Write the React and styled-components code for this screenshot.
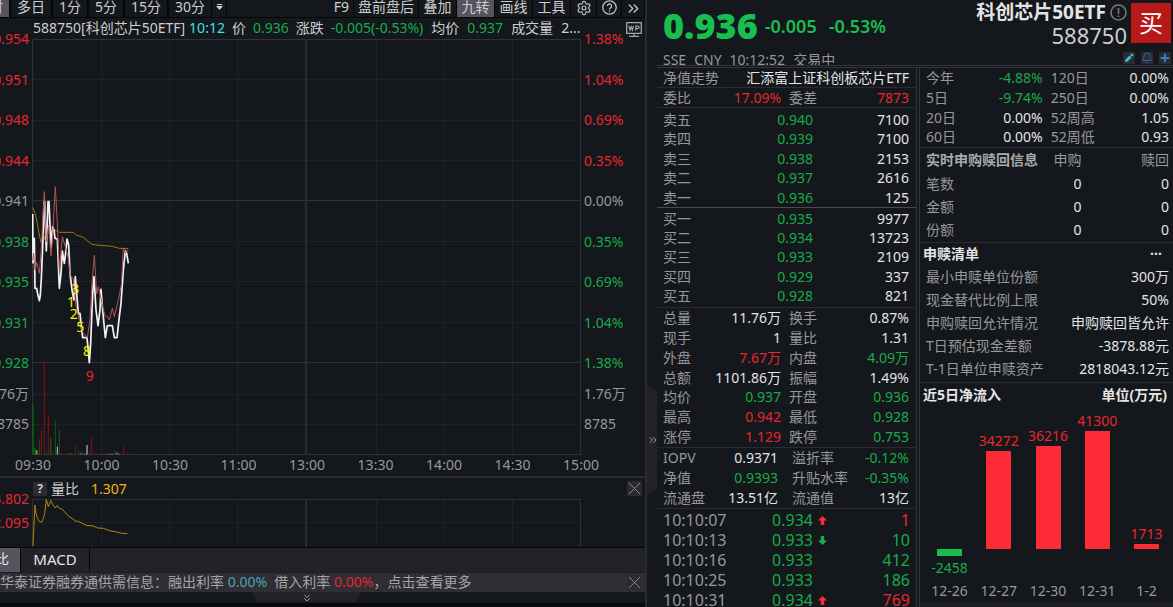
import React from "react";
import styled, { createGlobalStyle } from "styled-components";
import { Settings, ChevronsRight, ChevronsDown, Bell, Plus } from "lucide-react";

const c = {
  bg: "#14171c",
  panel: "#232228",
  raised: "#56555f",
  line: "#2a2b30",
  text: "#e4e4e4",
  soft: "#cecece",
  muted: "#989898",
  red: "#e8262f",
  green: "#18ab48",
  cyan: "#3fe0e6",
  teal: "#4aa5b8",
  gold: "#f5b40c",
};

const Global = createGlobalStyle`
  *, *::before, *::after { box-sizing: border-box; }
  html, body { margin: 0; background: ${c.bg}; }
  body {
    overflow: hidden;
    color: ${c.text};
    font: 14px/20px "Noto Sans", "Noto Sans CJK SC", sans-serif;
    white-space: nowrap;
  }
  button { font: inherit; color: inherit; background: none; border: 0; padding: 0; }
  ul, ol, dl, h1, h2, p { margin: 0; padding: 0; list-style: none; font: inherit; }
  a { color: inherit; text-decoration: none; }
  svg { display: block; }
`;

const Page = styled.main`
  display: grid;
  grid-template-columns: minmax(0, 1fr) 528px;
  height: 100vh;
  overflow: hidden;
`;

/* ---------- left: chart side ---------- */
const ChartSide = styled.section`
  display: flex;
  flex-direction: column;
  min-width: 0;
  min-height: 0;
`;

const Toolbar = styled.nav`
  display: flex;
  justify-content: space-between;
  flex: none;
  height: 18px;
  border-bottom: 1px solid #050608;
`;

const ToolGroup = styled.div`
  display: flex;
`;

const ToolButton = styled.button`
  display: flex;
  justify-content: ${(p) => (p.$clipped ? "flex-end" : "center")};
  align-items: flex-start;
  width: ${(p) => (p.$width ? `${p.$width}px` : "auto")};
  padding: 0 ${(p) => (p.$width ? 0 : p.$wide ? 6 : 4)}px;
  padding-right: ${(p) => (p.$clipped ? "6px" : "")};
  line-height: 14px;
  color: ${c.soft};
  background: ${(p) => (p.$active ? c.raised : "transparent")};
  border-left: ${(p) => (p.$wide ? 1 : 0)}px solid #050608;
  border-right: 1px solid #050608;
`;

const InfoLine = styled.div`
  display: flex;
  flex: none;
  height: 21px;
  padding: 0 3px 0 33px;
`;

const InfoText = styled.span`
  margin-right: ${(p) => p.$gap || 7}px;
  color: ${(p) => p.$color || c.soft};
`;

const InfoIcon = styled.button`
  margin-left: auto;
  padding-top: 3px;
`;

const PlotRow = styled.div`
  display: grid;
  grid-template-columns: 32px minmax(0, 1fr) 64px;
  flex: ${(p) => (p.$fill ? "1 1 0" : "none")};
  height: ${(p) => (p.$fill ? "auto" : "48px")};
  min-height: 0;
`;

const PlotArea = styled.div`
  position: relative;
  min-width: 0;
  min-height: 0;
  svg { position: absolute; width: 100%; height: 100%; }
`;

const AxisColumn = styled.div`
  display: flex;
  flex-direction: column;
  padding: ${(p) => (p.$right ? "0 0 0 3px" : "0 3px 0 0")};
`;

const AxisList = styled.ol`
  display: flex;
  flex-direction: column;
  flex: ${(p) => p.$grow} 1 0;
  justify-content: ${(p) => (p.$inner ? "space-evenly" : "space-between")};
`;

const AxisLabel = styled.li`
  display: flex;
  align-items: center;
  justify-content: ${(p) => (p.$right ? "flex-start" : "flex-end")};
  height: 0;
  color: ${(p) => p.$color || c.muted};
`;

const TurnMark = styled.span`
  position: absolute;
  left: ${(p) => p.$x}%;
  top: ${(p) => p.$y}%;
  transform: translate(-50%, -50%);
  line-height: 12px;
  color: ${(p) => p.$color || "#f2f20c"};
`;

const TimeAxis = styled.ol`
  display: flex;
  justify-content: space-between;
  flex: none;
  height: 23px;
  padding: 0 64px 0 33px;
  border-bottom: 2px solid ${c.line};
`;

const TimeLabel = styled.li`
  display: flex;
  justify-content: center;
  width: 0;
  color: ${c.muted};
`;

const IndicatorHead = styled.div`
  display: flex;
  align-items: center;
  flex: none;
  height: 21px;
  padding: 0 3px 0 33px;
`;

const HelpChip = styled.button`
  width: 14px;
  height: 14px;
  margin-right: 4px;
  line-height: 14px;
  font-weight: 700;
  font-size: 12px;
  color: ${c.soft};
  background: #2c2b31;
`;

const CloseButton = styled.button`
  width: 15px;
  height: 15px;
  margin-left: auto;
  color: #87878c;
  background: #2c2b31;
`;

const Tabs = styled.div`
  display: flex;
  flex: none;
  height: 26px;
  border-top: 1px solid #050608;
  border-bottom: 1px solid #1b1b20;
  background: ${c.panel};
`;

const Tab = styled.button`
  display: flex;
  justify-content: ${(p) => (p.$active ? "flex-end" : "center")};
  width: ${(p) => p.$width}px;
  padding-right: ${(p) => (p.$active ? 11 : 0)}px;
  font-size: ${(p) => (p.$active ? 14 : 15)}px;
  line-height: 22px;
  border-right: 1px solid #050608;
  background: ${(p) => (p.$active ? c.raised : "transparent")};
`;

const Notice = styled.div`
  display: flex;
  align-items: center;
  flex: none;
  height: 19px;
  padding-right: 3px;
  line-height: 18px;
  color: #a5a5a7;
  background: #2f2e34;
`;

const NoticeLink = styled.a`
  height: 19px;
`;

const Tone = styled.span`
  color: ${(p) => p.$color};
`;

const Drawer = styled.div`
  display: flex;
  justify-content: center;
  flex: none;
  height: 15px;
  padding-right: 32px;
  border-bottom: 4px solid #08090c;
`;

const DrawerHandle = styled.button`
  display: grid;
  place-items: center;
  width: 109px;
  height: 10px;
  color: #a2a2a5;
  background: ${c.panel};
  clip-path: polygon(0 0, 100% 0, 96% 100%, 4% 100%);
`;

/* ---------- right: quote side ---------- */
const QuoteSide = styled.section`
  display: grid;
  grid-template-columns: 10px minmax(0, 1fr);
  min-height: 0;
  border-left: 2px solid ${c.line};
`;

const Gutter = styled.div`
  display: flex;
  align-items: center;
  padding-top: 273px;
`;

const SideHandle = styled.button`
  display: grid;
  place-items: center;
  width: 10px;
  height: 108px;
  color: #a2a2a5;
  background: ${c.panel};
  clip-path: polygon(0 0, 100% 5%, 100% 95%, 0 100%);
`;

const QuoteBody = styled.div`
  display: flex;
  flex-direction: column;
  min-width: 0;
  min-height: 0;
`;

const Header = styled.header`
  display: flex;
  justify-content: space-between;
  flex: none;
  height: 68px;
  padding: 2px 2px 0 6px;
  overflow: hidden;
  border-bottom: 3px double #33333a;
`;

const PriceLine = styled.div`
  display: flex;
  align-items: center;
  gap: ${(p) => p.$gap}px;
  height: 48px;
  color: #18be50;
  font-weight: 700;
`;

const BigPrice = styled.strong`
  font-size: 36px;
  line-height: 48px;
`;

const Change = styled.span`
  font-size: 18px;
  font-weight: 600;
`;

const Status = styled.p`
  display: flex;
  gap: 8px;
  color: ${c.muted};
`;

const Identity = styled.div`
  display: grid;
  grid-template-columns: auto 40px;
  grid-template-rows: 20px 26px 16px;
  column-gap: 4px;
`;

const FundName = styled.h1`
  display: flex;
  align-items: center;
  justify-content: flex-end;
  gap: 4px;
  font-size: 19px;
  font-weight: 700;
  line-height: 20px;
`;

const FundCode = styled.p`
  grid-row: 2;
  text-align: right;
  font-size: 22px;
  line-height: 26px;
  color: ${c.soft};
`;

const BuyButton = styled.button`
  grid-column: 2;
  grid-row: 1 / 3;
  height: 40px;
  margin-top: 1px;
  font-size: 24px;
  line-height: 38px;
  color: #fff;
  background: #b91818;
`;

const IconRow = styled.div`
  grid-column: 1 / 3;
  grid-row: 3;
  display: flex;
  justify-content: flex-end;
  align-items: flex-end;
  gap: 6px;
`;

const MiniButton = styled.button`
  display: grid;
  place-items: center;
  width: 12px;
  height: 12px;
  color: ${(p) => p.$color};
  background: #2b2c32;
`;

const Panels = styled.div`
  display: grid;
  grid-template-columns: 259px minmax(0, 1fr);
  flex: 1;
  min-height: 0;
`;

const BookPanel = styled.div`
  min-height: 0;
  overflow: hidden;
`;

const FactPanel = styled.div`
  display: flex;
  flex-direction: column;
  min-height: 0;
  border-left: 4px double #33333a;
`;

const LineRow = styled.div`
  display: flex;
  justify-content: space-between;
  height: 20px;
  padding: 0 7px 0 6px;
  border-bottom: 1px solid ${c.line};
`;

const Block = styled.div`
  padding: ${(p) => p.$pad || "0 7px 0 6px"};
  border-bottom: ${(p) => (p.$plain ? 0 : 1)}px solid ${(p) => (p.$strong ? "#4a4a50" : c.line)};
`;

const DataTable = styled.table`
  width: 100%;
  height: ${(p) => (p.$height ? `${p.$height}px` : "auto")};
  table-layout: fixed;
  border-collapse: collapse;
  font-size: ${(p) => p.$size || 14}px;
  th, td { vertical-align: ${(p) => (p.$top ? "top" : "middle")}; }
`;

const Label = styled.th`
  width: ${(p) => p.$width || "auto"};
  padding: 0 0 0 ${(p) => p.$indent || 0}px;
  text-align: left;
  font-weight: 400;
  line-height: ${(p) => p.$line || 19}px;
  color: ${c.muted};
`;

const Value = styled.td`
  width: ${(p) => p.$width || "auto"};
  padding: 0 ${(p) => p.$inset || 0}px 0 0;
  text-align: right;
  line-height: ${(p) => p.$line || 19}px;
  color: ${(p) => p.$color || c.text};
`;

const ArrowCell = styled.td`
  width: 20px;
  padding: 0 0 0 5px;
`;

const SectionTitle = styled.h2`
  display: flex;
  justify-content: space-between;
  align-items: center;
  flex: none;
  height: ${(p) => p.$height}px;
  padding: 0 6px 0 3px;
  font-weight: 700;
`;

const Dots = styled.button`
  width: 22px;
  line-height: 12px;
  font-weight: 700;
`;

const FlowHead = styled.th`
  height: 24px;
  padding: 0;
  width: ${(p) => p.$width || "auto"};
  text-align: ${(p) => (p.$left ? "left" : "right")};
  font-weight: ${(p) => (p.$left ? 700 : 400)};
  color: ${(p) => (p.$left ? "#a9a9a9" : c.muted)};
`;

const Bars = styled.div`
  display: flex;
  flex: 1;
  min-height: 0;
  padding: 0 2px 0 5px;
  border-bottom: 5px solid #1c1d22;
`;

const BarColumn = styled.div`
  display: flex;
  flex-direction: column;
  flex: 1;
  align-items: center;
  color: ${(p) => (p.$down ? c.green : c.red)};
`;

const AboveZero = styled.div`
  display: flex;
  flex-direction: column;
  flex: 1;
  justify-content: flex-end;
  align-items: center;
`;

const BelowZero = styled.div`
  display: flex;
  flex-direction: column;
  align-items: center;
  gap: 2px;
  height: 30px;
`;

const Bar = styled.div`
  width: 25px;
  background: ${(p) => (p.$down ? "#18bd50" : "#fc2b35")};
`;

const BarDate = styled.span`
  height: 23px;
  line-height: 23px;
  color: ${c.muted};
`;

/* ---------- data ---------- */
const priceAxis = ["0.954", "0.951", "0.948", "0.944", "0.941", "0.938", "0.935", "0.931", "0.928"];
const pctAxis = ["1.38%", "1.04%", "0.69%", "0.35%", "0.00%", "0.35%", "0.69%", "1.04%", "1.38%"];
const axisTone = (i) => (i < 4 ? c.red : i > 4 ? c.green : c.muted);
const times = ["09:30", "10:00", "10:30", "11:00", "13:00", "13:30", "14:00", "14:30", "15:00"];

const priceLine =
  "98,132 99,278 103,205 105,355 110,355 113,372 118,392 121,375 124,325 128,230 132,95 134,95 139,243 144,95 147,95 153,235 158,170 162,180 165,205 172,207 178,355 183,310 187,243 190,262 193,280 198,240 201,207 206,225 210,310 216,360 222,390 226,320 230,370 235,430 240,430 243,460 248,503 261,503 268,578 272,520 278,370 282,320 288,420 294,467 300,420 303,358 308,420 316,503 322,467 337,467 343,503 351,503 358,440 363,400 370,300 376,243 380,250 385,280";
const leadLine =
  "98,270 101,250 105,300 110,278 118,310 123,250 133,65 139,215 146,165 153,258 158,195 166,50 172,160 178,300 187,200 196,230 205,265 211,318 220,325 228,410 243,470 250,490 262,503 270,450 276,340 283,255 290,372 295,350 303,385 308,410 315,438 322,440 328,450 337,415 343,440 350,410 356,385 364,345 370,233 376,250 380,243 385,243";
const averageLine =
  "98,112 105,130 112,160 118,195 123,218 128,218 135,200 145,188 155,182 172,182 178,187 220,187 228,195 250,202 262,212 275,223 300,226 337,229 358,235 385,236";
const ratioLine =
  "99,588 105,465 108,490 112,503 118,514 125,517 130,505 134,490 139,449 145,470 152,452 158,463 166,474 172,466 178,475 187,478 205,498 228,514 235,514 258,526 280,528 293,534 310,535 328,542 350,546 360,549 382,551";

const R = "#8e0d12";
const G = "#0d5c14";
const W = "#77777b";
const volumes = [
  [99, 165, G, 5], [104, 293, G, 6], [110, 300, W, 6], [118, 267, G], [124, 241, R], [133, 39, R],
  [139, 306, G], [145, 195, R], [152, 265, G, 4], [159, 311, R, 5], [166, 210, G], [172, 290, "#c8c8c8"],
  [178, 240, G], [187, 310, R, 5], [196, 311, R, 5], [204, 311, G, 6], [213, 309, G, 6], [220, 310, G],
  [227, 285, R], [236, 302, G], [242, 309, W], [248, 307, G, 5], [254, 311, W, 5], [261, 285, W, 6],
  [268, 310, G], [274, 262, R], [283, 311, R, 6], [292, 311, R, 6], [301, 311, G, 6], [310, 311, R, 5],
  [317, 309, G], [327, 311, W, 5], [336, 311, W, 5], [343, 300, G], [350, 307, W, 5], [358, 311, W, 5],
  [370, 289, R], [378, 311, R, 5], [385, 309, G],
];

const marks = [
  ["3", 7.9, 60.1], ["1", 7.1, 63.2], ["2", 7.6, 66.2], ["5", 8.8, 69.2], ["8", 10, 75.1], ["9", 10.5, 81, c.red],
];

const sells = [["卖五", "0.940", "7100"], ["卖四", "0.939", "7100"], ["卖三", "0.938", "2153"], ["卖二", "0.937", "2616"], ["卖一", "0.936", "125"]];
const buys = [["买一", "0.935", "9977"], ["买二", "0.934", "13723"], ["买三", "0.933", "2109"], ["买四", "0.929", "337"], ["买五", "0.928", "821"]];

const metrics = [
  ["总量", "11.76万", , "换手", "0.87%"],
  ["现手", "1", , "量比", "1.31"],
  ["外盘", "7.67万", c.red, "内盘", "4.09万", c.green],
  ["总额", "1101.86万", , "振幅", "1.49%"],
  ["均价", "0.937", c.green, "开盘", "0.936", c.green],
  ["最高", "0.942", c.red, "最低", "0.928", c.green],
  ["涨停", "1.129", c.red, "跌停", "0.753", c.green],
];
const fundMetrics = [
  ["IOPV", "0.9371", , "溢折率", "-0.12%", c.green],
  ["净值", "0.9393", c.green, "升贴水率", "-0.35%", c.green],
  ["流通盘", "13.51亿", , "流通值", "13亿"],
];
const returns = [
  ["今年", "-4.88%", c.green, "120日", "0.00%"],
  ["5日", "-9.74%", c.green, "250日", "0.00%"],
  ["20日", "0.00%", , "52周高", "1.05"],
  ["60日", "0.00%", , "52周低", "0.93"],
];
const ticks = [
  ["10:10:07", "0.934", "up", "1", c.red],
  ["10:10:13", "0.933", "down", "10", c.green],
  ["10:10:16", "0.933", "", "412", c.green],
  ["10:10:25", "0.933", "", "186", c.green],
  ["10:10:31", "0.934", "up", "769", c.red],
];
const creation = [
  ["最小申赎单位份额", "300万"],
  ["现金替代比例上限", "50%"],
  ["申购赎回允许情况", "申购赎回皆允许"],
  ["T日预估现金差额", "-3878.88元"],
  ["T-1日单位申赎资产", "2818043.12元"],
];
const flows = [["12-26", -2458], ["12-27", 34272], ["12-30", 36216], ["12-31", 41300], ["1-2", 1713]];

/* ---------- drawings ---------- */
const verticals = [101, 169, 237, 376, 444, 512];

function Grid({ top, bottom, solid, dotted }) {
  return (
    <g fill="none" stroke="#2b2c31" shapeRendering="crispEdges">
      {verticals.map((x) => (
        <path key={x} d={`M${x}.5 ${top}V${bottom}`} strokeDasharray="1 1" />
      ))}
      {dotted.map((y) => (
        <path key={y} d={`M33 ${y}.5H581`} strokeDasharray="1 1" />
      ))}
      {solid.map((y) => (
        <path key={y} d={`M32 ${y}.5H581`} stroke="#313237" />
      ))}
      <path d={`M32.5 ${top}V${bottom}M580.5 ${top}V${bottom}`} stroke="#303136" />
      <path d={`M306 ${top}V${bottom}`} stroke="#2a2b30" strokeWidth="2" />
    </g>
  );
}

function Trace({ points, color, width = 1, y }) {
  return (
    <g transform={`translate(0 ${y}) scale(0.33333)`}>
      <polyline points={points} fill="none" stroke={color} strokeWidth={width * 3} strokeLinejoin="round" />
    </g>
  );
}

const CrossIcon = () => (
  <svg width="15" height="15" viewBox="0 0 15 15" fill="none" stroke="currentColor">
    <path d="M2 2l11 11M13 2L2 13" />
  </svg>
);

const HelpIcon = () => (
  <svg width="15" height="15" viewBox="0 0 15 15" fill="none" stroke="#c0c0c0" strokeWidth="1.3">
    <circle cx="7.5" cy="7.5" r="6.7" />
    <path d="M5.4 6.1a2.1 2.1 0 1 1 3.1 1.8c-.7.4-1 .8-1 1.5M7.5 10.4v1.3" />
  </svg>
);

const MonitorIcon = () => (
  <svg width="16" height="16" viewBox="0 0 16 16" fill="none" stroke="#a5a5a5" strokeWidth="1.3">
    <path d="M.7.7h14.6v10.6H.7zM8 11.5V14M3 14.3h10" />
    <path d="M3 3.8l1 4.4 1.2-3.4 1.2 3.4 1-4.4M9.8 8.7V4.2h2q1.3 0 1.3 1.2t-1.3 1.2h-2" strokeWidth="1.2" />
  </svg>
);

const AlertIcon = () => (
  <svg width="17" height="17" viewBox="0 0 17 17" fill="none" stroke="#77777a" strokeWidth="1.6">
    <circle cx="8.5" cy="8.5" r="7.5" />
    <path d="M8.5 4v6M8.5 11.4v1.7" />
  </svg>
);

const PencilIcon = () => (
  <svg width="12" height="12" viewBox="0 0 12 12" fill="#36c3d6">
    <path d="M2 10l.5-2.6 4-4 2.1 2.1-4 4zM7.2 2.7l1-1q.6-.4 1.1 0l1 1q.4.6 0 1.1l-1 1z" />
  </svg>
);

const TickArrow = ({ dir }) => (
  <svg width="9" height="20" viewBox="0 -6 9 20" fill={dir === "up" ? "#fc2b35" : c.green}>
    {dir === "up" ? <path d="M4.5 0L9 4.6H6.2V9H2.8V4.6H0z" /> : <path d="M4.5 9L0 4.4h2.8V0h3.4v4.4H9z" />}
  </svg>
);

/* ---------- parts ---------- */
function Axis({ right, groups }) {
  return (
    <AxisColumn $right={right}>
      {groups.map((g, n) => (
        <AxisList key={n} $grow={g.grow} $inner={g.inner}>
          {g.items.map((t, i) => (
            <AxisLabel key={i} $right={right} $color={g.tone && g.tone(i)}>{t}</AxisLabel>
          ))}
        </AxisList>
      ))}
    </AxisColumn>
  );
}

function Book({ rows, height }) {
  return (
    <DataTable $height={height} $top>
      <tbody>
        {rows.map(([name, price, size]) => (
          <tr key={name}>
            <Label scope="row" $width="20%">{name}</Label>
            <Value $color={c.green} $width="41%">{price}</Value>
            <Value>{size}</Value>
          </tr>
        ))}
      </tbody>
    </DataTable>
  );
}

function Pairs({ rows, inset = 0, indent = 8, height }) {
  return (
    <DataTable $height={height} $top>
      <tbody>
        {rows.map(([a, b, tone, d, e, tone2]) => (
          <tr key={a}>
            <Label scope="row" $width="19%">{a}</Label>
            <Value $color={tone} $inset={inset} $width="29%">{b}</Value>
            <Label scope="row" $width="30%" $indent={indent}>{d}</Label>
            <Value $color={tone2}>{e}</Value>
          </tr>
        ))}
      </tbody>
    </DataTable>
  );
}

export default function App() {
  return (
    <Page>
      <Global />
      <ChartSide>
        <Toolbar>
          <ToolGroup>
            <ToolButton $active $clipped $width={10}>分时</ToolButton>
            {["多日", "1分", "5分", "15分", "30分"].map((t) => (
              <ToolButton key={t} $wide>{t}</ToolButton>
            ))}
            <ToolButton $width={15} aria-label="更多周期">
              <svg width="7" height="14" viewBox="0 0 7 14" fill="#d0d0d0">
                <path d="M1 4h5v1H1zM0 6h7L3.5 10z" />
              </svg>
            </ToolButton>
          </ToolGroup>
          <ToolGroup>
            <ToolButton>F9</ToolButton>
            <ToolButton>盘前盘后</ToolButton>
            <ToolButton $width={38}>叠加</ToolButton>
            <ToolButton $active $width={38}>九转</ToolButton>
            <ToolButton $width={38}>画线</ToolButton>
            <ToolButton $width={38}>工具</ToolButton>
            <ToolButton $width={26} aria-label="设置"><Settings size={16} color="#c0c0c0" strokeWidth={1.8} /></ToolButton>
            <ToolButton $width={25} aria-label="帮助"><HelpIcon /></ToolButton>
            <ToolButton $width={23} aria-label="展开"><ChevronsRight size={17} color="#c0c0c0" /></ToolButton>
          </ToolGroup>
        </Toolbar>

        <InfoLine>
          <InfoText $gap={4}>588750[科创芯片50ETF]</InfoText>
          <InfoText $color={c.cyan}>10:12</InfoText>
          <InfoText>价</InfoText>
          <InfoText $color={c.green}>0.936</InfoText>
          <InfoText>涨跌</InfoText>
          <InfoText $gap={8} $color={c.green}>-0.005(-0.53%)</InfoText>
          <InfoText $gap={8}>均价</InfoText>
          <InfoText $gap={8} $color={c.green}>0.937</InfoText>
          <InfoText $gap={8}>成交量</InfoText>
          <InfoText>2...</InfoText>
          <InfoIcon aria-label="WP"><MonitorIcon /></InfoIcon>
        </InfoLine>

        <PlotRow $fill>
          <Axis
            groups={[
              { grow: 324, items: priceAxis, tone: axisTone },
              { grow: 92, inner: true, items: ["1.76万", "8785"] },
            ]}
          />
          <PlotArea>
            <svg viewBox="32 39 549 416" preserveAspectRatio="none" role="img" aria-label="分时走势">
              <Grid top={39} bottom={455} solid={[39, 200, 362, 454]} dotted={[79, 120, 160, 241, 281, 322, 394, 424]} />
              {volumes.map(([x, y, color, w = 3]) => (
                <rect key={x} x={x / 3 - w / 6} y={350 + y / 3} width={w / 3} height={(314 - y) / 3} fill={color} />
              ))}
              <Trace points={averageLine} color="#a0770f" y={170} />
              <Trace points={priceLine} color="#f2f2f2" width={1.7} y={170} />
              <Trace points={leadLine} color="#b0565a" y={170} />
            </svg>
            {marks.map(([t, x, y, color]) => (
              <TurnMark key={t} $x={x} $y={y} $color={color}>{t}</TurnMark>
            ))}
          </PlotArea>
          <Axis
            right
            groups={[
              { grow: 324, items: pctAxis, tone: axisTone },
              { grow: 92, inner: true, items: ["1.76万", "8785"] },
            ]}
          />
        </PlotRow>

        <TimeAxis>
          {times.map((t) => (
            <TimeLabel key={t}>{t}</TimeLabel>
          ))}
        </TimeAxis>

        <IndicatorHead>
          <HelpChip aria-label="指标说明">?</HelpChip>
          <InfoText $gap={12}>量比</InfoText>
          <InfoText $color={c.gold}>1.307</InfoText>
          <CloseButton aria-label="关闭指标"><CrossIcon /></CloseButton>
        </IndicatorHead>

        <PlotRow>
          <Axis groups={[{ grow: 1, items: ["3.802", "2.095", ""], tone: () => c.red }]} />
          <PlotArea>
            <svg viewBox="32 499 549 48" preserveAspectRatio="none" role="img" aria-label="量比走势">
              <Grid top={499} bottom={547} solid={[499]} dotted={[522]} />
              <Trace points={ratioLine} color="#b5860f" y={350} />
            </svg>
          </PlotArea>
        </PlotRow>

        <Tabs>
          <Tab $active $width={21}>量比</Tab>
          <Tab $width={69}>MACD</Tab>
        </Tabs>

        <Notice>
          <NoticeLink href="#rates">
            华泰证券融券通供需信息：融出利率 <Tone $color={c.teal}>0.00%</Tone>&nbsp; 借入利率 <Tone $color={c.red}>0.00%</Tone>，点击查看更多
          </NoticeLink>
          <CloseButton aria-label="关闭公告"><CrossIcon /></CloseButton>
        </Notice>

        <Drawer>
          <DrawerHandle aria-label="展开底栏"><ChevronsDown size={12} /></DrawerHandle>
        </Drawer>
      </ChartSide>

      <QuoteSide>
        <Gutter>
          <SideHandle aria-label="收起"><ChevronsRight size={12} /></SideHandle>
        </Gutter>
        <QuoteBody>
          <Header>
            <div>
              <PriceLine $gap={7}>
                <BigPrice>0.936</BigPrice>
                <PriceLine $gap={12}>
                  <Change>-0.005</Change>
                  <Change>-0.53%</Change>
                </PriceLine>
              </PriceLine>
              <Status>
                <span>SSE</span>
                <span>CNY</span>
                <span>10:12:52</span>
                <span>交易中</span>
              </Status>
            </div>
            <Identity>
              <FundName>科创芯片50ETF <AlertIcon /></FundName>
              <FundCode>588750</FundCode>
              <BuyButton>买</BuyButton>
              <IconRow>
                <MiniButton aria-label="编辑"><PencilIcon /></MiniButton>
                <MiniButton aria-label="提醒" $color="#2f62b0"><Bell size={12} strokeWidth={2} /></MiniButton>
                <MiniButton aria-label="添加" $color="#3a7bd8"><Plus size={12} strokeWidth={4} /></MiniButton>
              </IconRow>
            </Identity>
          </Header>

          <Panels>
            <BookPanel>
              <LineRow>
                <Tone $color={c.muted}>净值走势</Tone>
                <span>汇添富上证科创板芯片ETF</span>
              </LineRow>
              <Block>
                <Pairs rows={[["委比", "17.09%", c.red, "委差", "7873", c.red]]} height={19} />
              </Block>
              <Block $pad="2px 7px 0 6px" $strong><Book rows={sells} height={97} /></Block>
              <Block $pad="1px 7px 2px 6px"><Book rows={buys} height={96} /></Block>
              <Block><Pairs rows={metrics} height={139} /></Block>
              <Block><Pairs rows={fundMetrics} height={60} inset={3} indent={11} /></Block>
              <Block $pad="1px 6px 0 6px" $plain>
                <DataTable $size={16} $top>
                  <tbody>
                    {ticks.map(([time, price, dir, size, tone]) => (
                      <tr key={time}>
                        <Label scope="row" $width="70px" $line={20}>{time}</Label>
                        <Value $color={c.green} $line={20} $width="80px">{price}</Value>
                        <ArrowCell>{dir && <TickArrow dir={dir} />}</ArrowCell>
                        <Value $color={tone} $line={20}>{size}</Value>
                      </tr>
                    ))}
                  </tbody>
                </DataTable>
              </Block>
            </BookPanel>

            <FactPanel>
              <Block $pad="0 4px 0 6px"><Pairs rows={returns} height={79} /></Block>
              <Block $pad="0 4px 1px 6px">
                <DataTable $height={93}>
                  <thead>
                    <tr>
                      <FlowHead scope="col" $left $width="48%">实时申购赎回信息</FlowHead>
                      <FlowHead scope="col" $width="16%">申购</FlowHead>
                      <FlowHead scope="col">赎回</FlowHead>
                    </tr>
                  </thead>
                  <tbody>
                    {["笔数", "金额", "份额"].map((t) => (
                      <tr key={t}>
                        <Label scope="row">{t}</Label>
                        <Value>0</Value>
                        <Value>0</Value>
                      </tr>
                    ))}
                  </tbody>
                </DataTable>
              </Block>
              <SectionTitle $height={22}>
                申赎清单 <Dots aria-label="更多">···</Dots>
              </SectionTitle>
              <Block $pad="0 4px 2px 6px">
                <DataTable $height={115}>
                  <tbody>
                    {creation.map(([a, b]) => (
                      <tr key={a}>
                        <Label scope="row" $width="54%">{a}</Label>
                        <Value>{b}</Value>
                      </tr>
                    ))}
                  </tbody>
                </DataTable>
              </Block>
              <SectionTitle $height={24}>
                近5日净流入 <span>单位(万元)</span>
              </SectionTitle>
              <Bars>
                {flows.map(([date, v]) => {
                  const down = v < 0;
                  const bar = <Bar $down={down} style={{ height: Math.round(Math.abs(v) / 350) }} />;
                  return (
                    <BarColumn key={date} $down={down}>
                      <AboveZero>{!down && <>{v}{bar}</>}</AboveZero>
                      <BelowZero>{down && <>{bar}{v}</>}</BelowZero>
                      <BarDate>{date}</BarDate>
                    </BarColumn>
                  );
                })}
              </Bars>
            </FactPanel>
          </Panels>
        </QuoteBody>
      </QuoteSide>
    </Page>
  );
}
